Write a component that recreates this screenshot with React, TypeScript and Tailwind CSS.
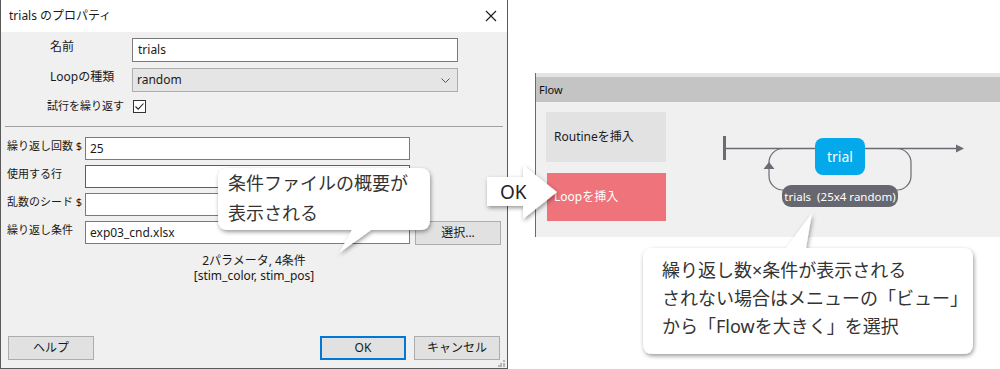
import React from "react";

const font = "font-['Noto_Sans','Noto_Sans_CJK_JP',sans-serif]";

function Field({ label, value, focus }: { label: string; value?: string; focus?: boolean }) {
  return (
    <div className="flex items-start">
      <span className="w-[78px] shrink-0 whitespace-nowrap text-[11px] leading-[16px] pt-[1px] text-[#1a1a1a]">{label}</span>
      <div
        className={`w-[325px] h-[23px] bg-white border flex items-center pl-[4px] text-[12px] ${
          focus ? "border-[#0078d7]" : "border-[#7a7a7a]"
        }`}
      >
        {value}
      </div>
    </div>
  );
}

function Btn({ children, primary }: { children: React.ReactNode; primary?: boolean }) {
  return (
    <div
      className={`w-[86px] h-[24px] bg-[#e1e1e1] flex items-center justify-center text-[12px] ${
        primary ? "border-2 border-[#0078d7]" : "border border-[#adadad]"
      }`}
    >
      {children}
    </div>
  );
}

function Dialog() {
  return (
    <div className="w-[508px] h-[369px] shrink-0 flex flex-col border-x border-b border-[#5a5a5a] bg-[#f0f0f0] text-[#1a1a1a]">
      <div className="h-[32px] bg-white flex items-center justify-between pl-[8px] pr-[10px]">
        <span className="text-[12px] leading-[16px]">trials のプロパティ</span>
        <svg width="12" height="12" viewBox="0 0 12 12">
          <path d="M1 1 L11 11 M11 1 L1 11" stroke="#1a1a1a" strokeWidth="1.1" />
        </svg>
      </div>

      <div className="flex-1 flex flex-col">
        <div className="pl-[49px] pt-[6px] grid grid-cols-[82px_326px] gap-y-[6px] items-start">
          <span className="text-[12px] leading-[16px] pt-[1px] whitespace-nowrap">名前</span>
          <div className="h-[24px] bg-white border border-[#7a7a7a] flex items-center pl-[5px] text-[12px]">trials</div>
          <span className="text-[12px] leading-[16px] pt-[1px] whitespace-nowrap">Loopの種類</span>
          <div className="h-[24px] bg-[#e5e5e5] border border-[#adadad] flex items-center justify-between pl-[4px] pr-[7px] text-[12px]">
            <span>random</span>
            <svg width="9" height="5" viewBox="0 0 9 5">
              <path d="M0.5 0.5 L4.5 4.5 L8.5 0.5" stroke="#555" fill="none" />
            </svg>
          </div>
          <span className="text-[11px] leading-[16px] ml-[-3px] self-center whitespace-nowrap">試行を繰り返す</span>
          <div className="h-[16px] flex items-center pl-[1px]">
            <div className="w-[13px] h-[13px] bg-white border border-[#333] flex items-center justify-center">
              <svg width="11" height="11" viewBox="0 0 11 11">
                <path d="M1.5 5.5 L4.2 8.2 L9.5 2.5" stroke="#222" strokeWidth="1.1" fill="none" />
              </svg>
            </div>
          </div>
        </div>

        <div className="mx-[4px] mt-[12px] h-px bg-[#a0a0a0]" />

        <div className="pl-[6px] pt-[10px] flex flex-col gap-[5px]">
          <Field label="繰り返し回数 $" value="25" />
          <Field label="使用する行" focus />
          <Field label="乱数のシード $" />
          <div className="flex items-start">
            <Field label="繰り返し条件" value="exp03_cnd.xlsx" />
            <div className="ml-[5px]">
              <Btn>選択...</Btn>
            </div>
          </div>
        </div>

        <div className="mt-[8px] text-center text-[12px] leading-[15px]">
          <div>2パラメータ, 4条件</div>
          <div>[stim_color, stim_pos]</div>
        </div>

        <div className="mt-auto pb-[8px] px-[7px] flex items-center relative">
          <Btn>ヘルプ</Btn>
          <div className="ml-auto flex gap-[8px]">
            <Btn primary>OK</Btn>
            <Btn>キャンセル</Btn>
          </div>
          <svg className="absolute right-[2px] bottom-[1px]" width="7" height="7" viewBox="0 0 7 7">
            <rect x="5" y="0" width="2" height="2" fill="#b5b5b5" />
            <rect x="2" y="3" width="2" height="2" fill="#b5b5b5" />
            <rect x="5" y="3" width="2" height="2" fill="#b5b5b5" />
            <rect x="0" y="5" width="2" height="2" fill="#b5b5b5" />
            <rect x="2" y="5" width="2" height="2" fill="#b5b5b5" />
            <rect x="5" y="5" width="2" height="2" fill="#b5b5b5" />
          </svg>
        </div>
      </div>
    </div>
  );
}

function FlowDiagram() {
  const line = "#6b6b73";
  return (
    <svg width="310" height="135" viewBox="0 0 310 135" className="ml-[24px] shrink-0">
      <rect x="33" y="34" width="3" height="24" fill={line} />
      <line x1="36" y1="46.5" x2="268" y2="46.5" stroke={line} strokeWidth="1.3" />
      <path d="M274 46.5 L266 42.5 L266 50.5 Z" fill={line} />
      <rect x="79" y="46.5" width="142" height="41.5" rx="14" fill="none" stroke={line} strokeWidth="1.2" />
      <path d="M79 60 L73.5 67 L84.5 67 Z" fill={line} />
      <rect x="125" y="36" width="50" height="37" rx="8" fill="#03a9ea" />
      <text x="150" y="60" textAnchor="middle" fill="#fff" fontSize="14" fontFamily="Noto Sans, sans-serif">
        trial
      </text>
      <rect x="92" y="83" width="116" height="22" rx="9" fill="#67676f" />
      <text
        x="150"
        y="98.5"
        textAnchor="middle"
        fill="#fff"
        fontSize="11.5"
        fontFamily="Noto Sans, sans-serif"
        style={{ whiteSpace: "pre" }}
      >
        {"trials  (25x4 random)"}
      </text>
    </svg>
  );
}

function FlowPanel() {
  return (
    <div className="ml-[27px] mt-[73px] w-[465px] h-[164px] border-l border-[#6a6a6a] flex flex-col shrink-0">
      <div className="h-[4px] bg-[#e3e3e3]" />
      <div className="h-[25px] bg-[#c4c4c4] flex items-center pl-[3px] text-[11px] leading-[14px] text-[#111]">Flow</div>
      <div className="flex-1 bg-[#f0f0f0] flex">
        <div className="pl-[10px] pt-[10px] flex flex-col gap-[11px]">
          <div className="w-[120px] h-[50px] bg-[#e2e2e2] flex items-center pl-[8px] text-[12px] text-[#1a1a1a]">Routineを挿入</div>
          <div className="w-[119px] h-[48px] ml-[1px] bg-[#ef737a] flex items-center pl-[7px] text-[12px] text-white">Loopを挿入</div>
        </div>
        <FlowDiagram />
      </div>
    </div>
  );
}

export default function App() {
  return (
    <div className={`relative w-[1000px] h-[369px] bg-white flex overflow-hidden ${font}`}>
      <Dialog />
      <FlowPanel />

      <svg className="absolute inset-0 pointer-events-none" width="1000" height="369" viewBox="0 0 1000 369">
        <defs>
          <filter id="sh" x="-20%" y="-20%" width="140%" height="150%">
            <feDropShadow dx="1" dy="2" stdDeviation="2.2" floodColor="#000" floodOpacity="0.4" />
          </filter>
        </defs>
        <path
          d="M228 168 H420 Q430 168 430 178 V220 Q430 230 420 230 H371 L339 253 L352 230 H228 Q218 230 218 220 V178 Q218 168 228 168 Z"
          fill="#fff"
          filter="url(#sh)"
        />
        <path d="M487 177 H523 V165 L557 192 L523 219 V206 H487 Z" fill="#fff" filter="url(#sh)" />
        <path
          d="M653 248 H786 L812 213 L806 248 H963 Q973 248 973 258 V344 Q973 354 963 354 H653 Q643 354 643 344 V258 Q643 248 653 248 Z"
          fill="#fff"
          filter="url(#sh)"
        />
      </svg>

      <div className="absolute left-[228px] top-[168px] text-[18px] leading-[30px] text-[#333] whitespace-nowrap">
        <div>条件ファイルの概要が</div>
        <div>表示される</div>
      </div>
      <div className="absolute left-[500px] top-[178px] text-[19px] leading-[28px] text-[#222]">OK</div>
      <div className="absolute left-[662px] top-[256px] text-[18px] leading-[28px] text-[#333] whitespace-nowrap">
        <div>繰り返し数×条件が表示される</div>
        <div>されない場合はメニューの「ビュー」</div>
        <div>から「Flowを大きく」を選択</div>
      </div>
    </div>
  );
}
